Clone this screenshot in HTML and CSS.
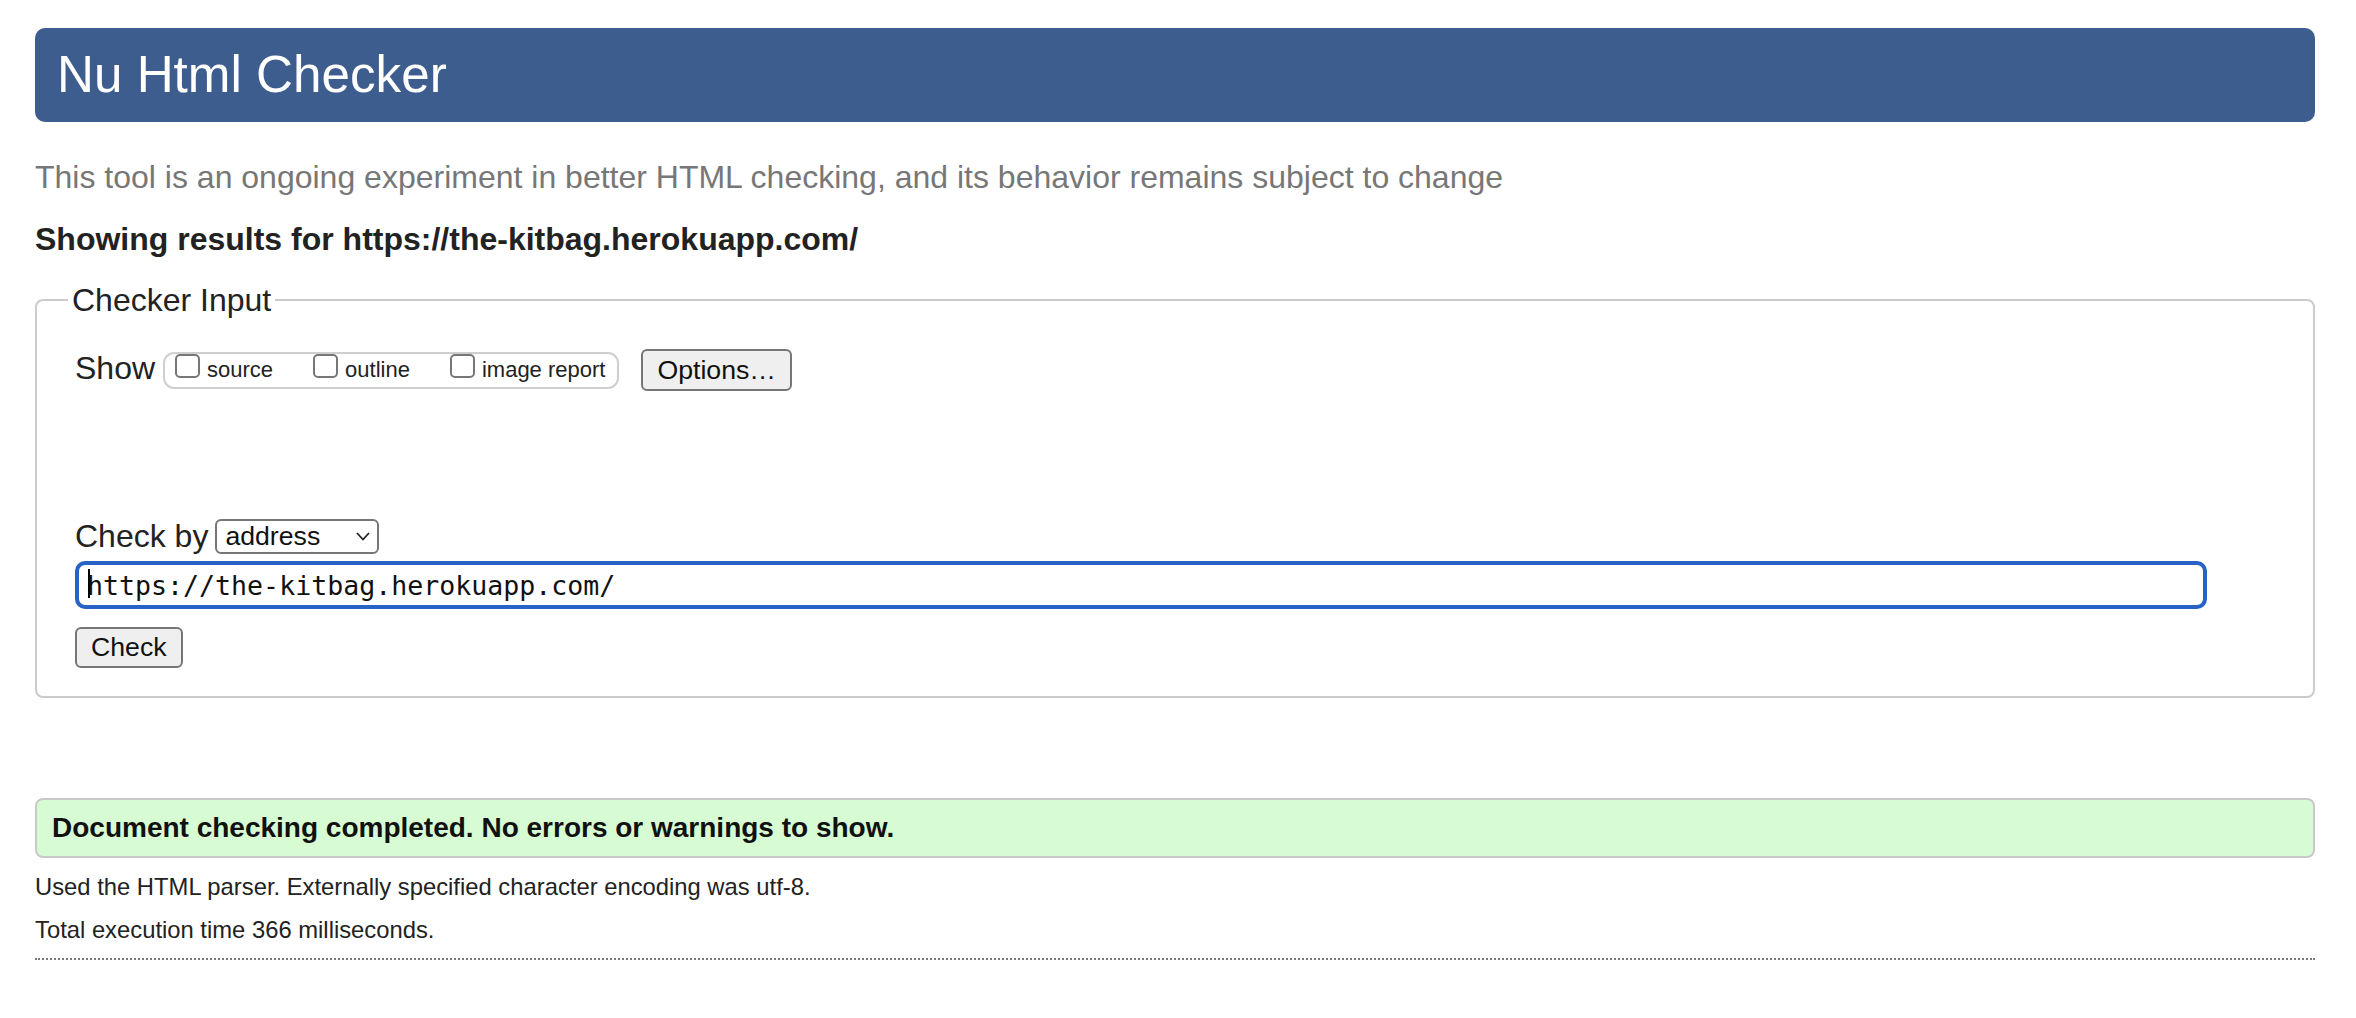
FILE: index.html
```html
<!DOCTYPE html>
<html lang="en">
<head>
<meta charset="utf-8">
<title>Nu Html Checker</title>
<link rel="stylesheet" href="styles.css">
</head>
<body>
<div class="page">
  <h1 class="banner">Nu Html Checker</h1>
  <p class="intro">This tool is an ongoing experiment in better HTML checking, and its behavior remains subject to change</p>
  <h2 class="results-for">Showing results for https://the-kitbag.herokuapp.com/</h2>

  <fieldset class="checker">
    <legend class="checker-legend">Checker Input</legend>

    <div class="row row-show">
      <span class="label show-label">Show</span>
      <div class="opts">
        <label class="opt"><span class="box"></span><span class="opt-text">source</span></label>
        <label class="opt"><span class="box"></span><span class="opt-text">outline</span></label>
        <label class="opt"><span class="box"></span><span class="opt-text">image report</span></label>
      </div>
      <button class="btn btn-options" type="button">Options…</button>
    </div>

    <div class="row row-checkby">
      <span class="label checkby-label">Check by</span>
      <div class="select">
        <span class="select-value">address</span>
        <svg class="chev" width="14" height="9" viewBox="0 0 14 9"><path d="M1 1 L7 7.5 L13 1" fill="none" stroke="#222" stroke-width="1.8"/></svg>
      </div>
    </div>

    <div class="url-wrap">
      <input class="url" type="text" value="https://the-kitbag.herokuapp.com/">
      <span class="caret"></span>
    </div>

    <button class="btn btn-check" type="button">Check</button>
  </fieldset>

  <div class="success">Document checking completed. No errors or warnings to show.</div>
  <p class="meta meta-first">Used the HTML parser. Externally specified character encoding was utf-8.</p>
  <p class="meta">Total execution time 366 milliseconds.</p>
  <hr class="end">
</div>
</body>
</html>
```

FILE: styles.css
```css
html, body {
  margin: 0;
  padding: 0;
  background: #fff;
}
body {
  font-family: "Liberation Sans", Arial, Helvetica, sans-serif;
  color: #222;
}
.page {
  padding: 28px 41px 0 35px;
}
.banner {
  margin: 0;
  height: 94px;
  box-sizing: border-box;
  background: #3e5d8f;
  color: #fff;
  border-radius: 10px;
  font-weight: normal;
  font-size: 51.2px;
  line-height: 94px;
  padding-left: 22px;
}
.intro {
  margin: 35px 0 0;
  font-size: 32px;
  line-height: 40px;
  color: #777;
}
.results-for {
  margin: 22px 0 0;
  font-size: 32px;
  line-height: 40px;
  font-weight: bold;
  color: #222;
}
.checker {
  margin: 21px 0 0;
  padding: 0 38px 28px 38px;
  border: 2px solid #cbcbcb;
  border-radius: 8px;
  min-width: 0;
}
.checker-legend {
  margin-left: -7px;
  padding: 0 4px;
  font-size: 32px;
  line-height: 40px;
  color: #222;
}
.row {
  display: flex;
  align-items: flex-start;
}
.row-show {
  margin-top: 29px;
  height: 42px;
}
.label {
  font-size: 32px;
  line-height: 40px;
  color: #222;
}
.show-label {
  margin-top: -1px;
}
.opts {
  margin: 3px 0 0 8px;
  height: 37px;
  box-sizing: border-box;
  border: 2px solid #cfcfcf;
  border-radius: 11px;
  display: flex;
  align-items: flex-start;
  gap: 40px;
  padding: 0 12px 0 10px;
}
.opt {
  display: flex;
  align-items: flex-start;
  gap: 7px;
}
.box {
  width: 25px;
  height: 24px;
  box-sizing: border-box;
  border: 2px solid #777;
  border-radius: 5px;
  background: #fff;
}
.opt-text {
  font-size: 22px;
  line-height: 24px;
  padding-top: 4px;
  color: #222;
}
.btn {
  font-family: "Liberation Sans", Arial, Helvetica, sans-serif;
  font-size: 26.67px;
  color: #111;
  background: #efefef;
  border: 2px solid #767676;
  border-radius: 6px;
  box-sizing: border-box;
  padding: 0 14px;
  margin: 0;
}
.btn-options {
  margin-left: 22px;
  height: 42px;
  line-height: 38px;
}
.row-checkby {
  margin-top: 128px;
  height: 35px;
}
.checkby-label {
  margin-top: -3px;
}
.select {
  margin-left: 7px;
  width: 164px;
  height: 35px;
  box-sizing: border-box;
  border: 2px solid #767676;
  border-radius: 6px;
  display: flex;
  align-items: center;
  justify-content: space-between;
  padding: 0 7px 0 8px;
  font-size: 26.67px;
  color: #111;
}
.select-value {
  line-height: 31px;
}
.chev {
  display: block;
}
.url-wrap {
  position: relative;
  margin-top: 7px;
  width: 2132px;
}
.url {
  display: block;
  width: 100%;
  height: 48px;
  box-sizing: border-box;
  border: 4px solid #2862c6;
  border-radius: 10px;
  outline: none;
  padding: 0 8px;
  margin: 0;
  font-family: "DejaVu Sans Mono", Menlo, monospace;
  font-size: 26.6px;
  color: #111;
  background: #fff;
}
.caret {
  position: absolute;
  left: 13px;
  top: 8px;
  width: 2px;
  height: 29px;
  background: #000;
}
.btn-check {
  display: block;
  margin-top: 18px;
  height: 41px;
  line-height: 37px;
}
.success {
  margin-top: 100px;
  height: 60px;
  box-sizing: border-box;
  background: #d7fcd3;
  border: 2px solid #c9c9c9;
  border-radius: 8px;
  padding-left: 15px;
  font-size: 28px;
  font-weight: bold;
  line-height: 56px;
  color: #111;
}
.meta {
  margin: 11px 0 0;
  font-size: 23.8px;
  line-height: 32px;
  color: #222;
}
.meta-first {
  margin-top: 13px;
}
.end {
  margin: 12px 0 0;
  border: 0;
  border-top: 2px dotted #777;
  height: 0;
}
```
